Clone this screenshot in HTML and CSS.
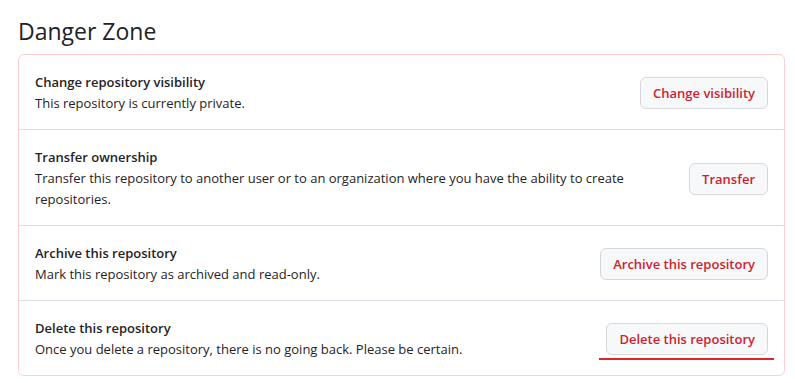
FILE: index.html
```html
<!DOCTYPE html>
<html lang="en">
<head>
    <meta charset="UTF-8">
    <meta name="viewport" content="width=device-width, initial-scale=1.0">
    <title>Danger Zone</title>
    <link rel="stylesheet" href="styles.css">
</head>
<body>
    <div class="container">
        <h2 class="subhead">Danger Zone</h2>

        <div class="danger-box">
            <div class="danger-item">
                <div class="item-text">
                    <strong>Change repository visibility</strong>
                    <p>This repository is currently private.</p>
                </div>
                <button class="danger-button">Change visibility</button>
            </div>

            <div class="danger-item">
                <div class="item-text">
                    <strong>Transfer ownership</strong>
                    <p>Transfer this repository to another user or to an organization where you have the ability to create repositories.</p>
                </div>
                <button class="danger-button">Transfer</button>
            </div>

            <div class="danger-item">
                <div class="item-text">
                    <strong>Archive this repository</strong>
                    <p>Mark this repository as archived and read-only.</p>
                </div>
                <button class="danger-button">Archive this repository</button>
            </div>

            <div class="danger-item">
                <div class="item-text">
                    <strong>Delete this repository</strong>
                    <p>Once you delete a repository, there is no going back. Please be certain.</p>
                </div>
                <div class="button-wrap">
                    <button class="danger-button">Delete this repository</button>
                    <span class="underline-mark"></span>
                </div>
            </div>
        </div>
    </div>
</body>
</html>
```

FILE: styles.css
```css
body {
    font-family: "Open Sans", "Noto Sans", Arial, sans-serif;
    font-size: 13px;
    line-height: 21px;
    color: #1f2328;
    margin: 0;
    background-color: #ffffff;
}
.container {
    padding: 14px 10px 0 18px;
}
.subhead {
    font-size: 23px;
    font-weight: 400;
    line-height: 34px;
    margin: 0 0 6px 0;
}
.danger-box {
    border: 1px solid #ffcecf;
    border-radius: 6px;
}
.danger-item {
    display: flex;
    align-items: center;
    padding: 17px 16px 15px 16px;
    border-top: 1px solid #d8dee4;
}
.danger-item:first-child {
    border-top: none;
}
.item-text {
    flex: 1 1 auto;
    margin-right: 16px;
}
.item-text strong {
    display: block;
    font-weight: 600;
}
.item-text p {
    margin: 0;
}
.danger-button {
    flex: none;
    font-family: inherit;
    font-size: 13px;
    font-weight: 600;
    line-height: 20px;
    color: #cf222e;
    background-color: #f6f8fa;
    border: 1px solid #d5d8da;
    border-radius: 6px;
    padding: 5px 12px;
    height: 32px;
    white-space: nowrap;
    cursor: pointer;
}
.button-wrap {
    position: relative;
    flex: none;
}
.underline-mark {
    position: absolute;
    left: -7px;
    right: -6px;
    bottom: -5px;
    height: 2px;
    background-color: #e3232a;
}
```
